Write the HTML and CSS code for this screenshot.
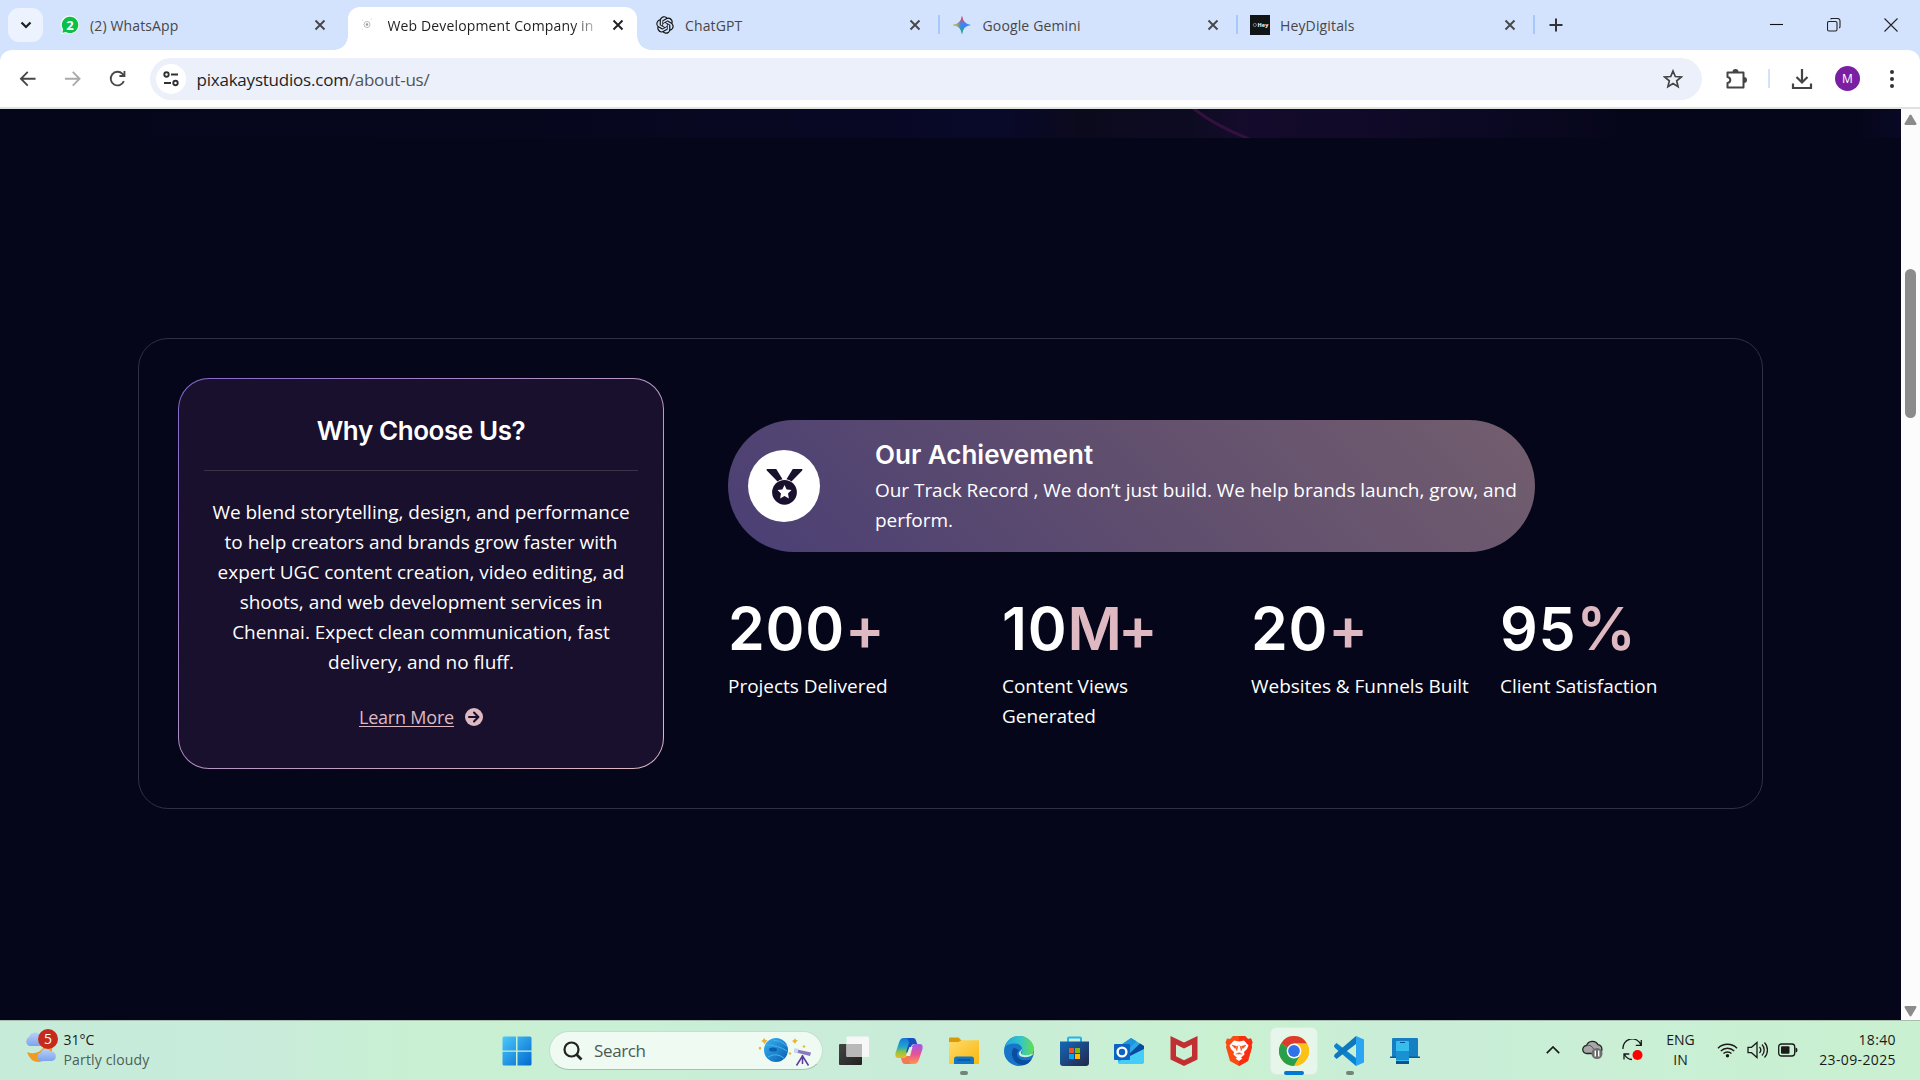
FILE: index.html
```html
<!DOCTYPE html>
<html lang="en">
<head>
<meta charset="utf-8">
<title>Web Development Company in Chennai</title>
<link rel="stylesheet" href="styles.css">
</head>
<body>
<header class="browser">
  <div class="tabstrip">
    <button class="tab-search" aria-label="Search tabs"><svg width="12" height="8" viewBox="0 0 12 8"><path d="M1.500 1.500 6 6l4.500-4.500" fill="none" stroke="#1f1f1f" stroke-width="2.200"/></svg></button>
    <div class="tabs">
      <div class="tab">
        <svg class="fav" viewBox="0 0 20 20"><path d="M10 .5a9.300 9.300 0 1 1-4.500 17.500L.8 19.200 2 14.800A9.300 9.300 0 0 1 10 .5z" fill="#f3fbf5"/><path d="M10 1.700a8.200 8.200 0 1 1-4.200 15.200L2.300 17.800l.9-3.400A8.200 8.200 0 0 1 10 1.700z" fill="#0bbf47"/><text x="10" y="14.500" text-anchor="middle" class="wa-count">2</text></svg>
        <span class="tab-title">(2) WhatsApp</span>
        <svg class="close" viewBox="0 0 12 12"><path d="M1.500 1.500l9 9m0-9l-9 9"/></svg>
      </div>
      <div class="tab active">
        <svg class="fav" viewBox="0 0 20 20"><circle cx="9" cy="9.500" r="3" fill="none" stroke="#bbb" stroke-width="1"/><circle cx="9" cy="9.500" r="1.200" fill="#999"/><path d="M4 6l1-1.500M13 5l.8-1.500M4 14l.5 1" stroke="#ddd"/></svg>
        <span class="tab-title fade">Web Development Company in</span>
        <svg class="close" viewBox="0 0 12 12"><path d="M1.500 1.500l9 9m0-9l-9 9"/></svg>
      </div>
      <div class="tab">
        <svg class="fav" viewBox="0 0 24 24"><path d="M22.280 9.820a5.980 5.980 0 0 0-.52-4.910 6.050 6.050 0 0 0-6.510-2.900A6.070 6.070 0 0 0 4.980 4.180a5.980 5.980 0 0 0-4 2.900 6.050 6.050 0 0 0 .74 7.100 5.980 5.980 0 0 0 .51 4.910 6.050 6.050 0 0 0 6.520 2.900A5.980 5.980 0 0 0 13.260 24a6.060 6.060 0 0 0 5.770-4.210 5.990 5.990 0 0 0 4-2.900 6.060 6.060 0 0 0-.75-7.070zm-9.020 12.610a4.480 4.480 0 0 1-2.880-1.040l.14-.08 4.780-2.760a.8.8 0 0 0 .39-.68v-6.740l2.020 1.170v5.630a4.500 4.500 0 0 1-4.450 4.500zM3.600 18.300a4.470 4.470 0 0 1-.54-3.010l.14.090 4.780 2.760a.77.77 0 0 0 .78 0l5.840-3.370v2.330l-4.860 2.830A4.500 4.500 0 0 1 3.600 18.300zM2.340 7.900a4.490 4.490 0 0 1 2.370-1.970V11.600a.77.77 0 0 0 .39.680l5.810 3.350-2.020 1.170-4.900-2.760A4.500 4.500 0 0 1 2.340 7.900zm16.600 3.850-5.840-3.370 2.020-1.160 4.900 2.780a4.500 4.500 0 0 1-.68 8.100v-5.670a.79.79 0 0 0-.4-.68zm2.010-3.020-.14-.09-4.780-2.780a.78.78 0 0 0-.78 0L9.410 9.230V6.900l4.860-2.800a4.500 4.500 0 0 1 6.680 4.660zM8.310 12.860l-2.020-1.160V6.070a4.500 4.500 0 0 1 7.380-3.450l-.14.080-4.780 2.760a.8.8 0 0 0-.39.680zm1.090-2.360 2.600-1.500 2.610 1.500v3l-2.600 1.500-2.610-1.500z" fill="#111" fill-rule="evenodd" transform="translate(1.500 1.500) scale(.875)"/></svg>
        <span class="tab-title">ChatGPT</span>
        <svg class="close" viewBox="0 0 12 12"><path d="M1.500 1.500l9 9m0-9l-9 9"/></svg>
      </div>
      <div class="tab sep">
        <svg class="fav gem" viewBox="0 0 20 20"><defs><clipPath id="star"><path d="M10 .8C11 6.500 13.500 9 19.200 10 13.500 11 11 13.500 10 19.200 9 13.500 6.500 11 .8 10 6.500 9 9 6.500 10 .8z"/></clipPath><radialGradient id="gr" cx="10" cy="0" r="9" gradientUnits="userSpaceOnUse"><stop offset=".4" stop-color="#f04a4a"/><stop offset="1" stop-color="#f04a4a" stop-opacity="0"/></radialGradient><radialGradient id="gy" cx="0" cy="10" r="9" gradientUnits="userSpaceOnUse"><stop offset=".3" stop-color="#fbbc04"/><stop offset="1" stop-color="#fbbc04" stop-opacity="0"/></radialGradient><radialGradient id="gg" cx="9" cy="20" r="9" gradientUnits="userSpaceOnUse"><stop offset=".3" stop-color="#22b04c"/><stop offset="1" stop-color="#22b04c" stop-opacity="0"/></radialGradient></defs><g clip-path="url(#star)"><path d="M0 0h20v20H0z" fill="#3b86f7"/><path d="M0 0h20v20H0z" fill="url(#gr)"/><path d="M0 0h20v20H0z" fill="url(#gy)"/><path d="M0 0h20v20H0z" fill="url(#gg)"/></g></svg>
        <span class="tab-title">Google Gemini</span>
        <svg class="close" viewBox="0 0 12 12"><path d="M1.500 1.500l9 9m0-9l-9 9"/></svg>
      </div>
      <div class="tab sep">
        <svg class="fav" viewBox="0 0 20 20"><path d="M0 0h20v20H0z" fill="#101416"/><circle cx="4.800" cy="10" r="1.600" fill="none" stroke="#778"/><text x="7.500" y="12" class="hey-mark">Hey</text></svg>
        <span class="tab-title">HeyDigitals</span>
        <svg class="close" viewBox="0 0 12 12"><path d="M1.500 1.500l9 9m0-9l-9 9"/></svg>
      </div>
    </div>
    <div class="new-tab"><svg width="14" height="14" viewBox="0 0 14 14"><path d="M7 .5v13M.5 7h13" stroke="#333" stroke-width="2"/></svg></div>
    <div class="window-controls">
      <svg viewBox="0 0 14 14"><path d="M0 6.500h13" stroke="#111"/></svg>
      <svg viewBox="0 0 14 14"><rect x=".5" y="3.500" width="9.500" height="9.500" rx="1.500"/><path d="M3.500 1.200Q4 .5 5 .5h5.500a2.500 2.500 0 0 1 2.500 2.500v5.500q0 1-.8 1.500"/></svg>
      <svg viewBox="0 0 14 14"><path d="M.5.5l13 13m0-13l-13 13"/></svg>
    </div>
  </div>
  <div class="toolbar">
    <div class="nav">
      <svg viewBox="0 0 20 20"><path d="M18 10H3m7-7-7 7 7 7"/></svg>
      <svg class="off" viewBox="0 0 20 20"><path d="M2 10h15m-7-7 7 7-7 7"/></svg>
      <svg viewBox="0 0 20 20"><path d="M17.300 12.500A7 7 0 1 1 15.900 5l1.700 1.700M17.900 2v5.200h-5.200"/></svg>
    </div>
    <div class="omnibox">
      <span class="site-chip"><svg width="18" height="18" viewBox="0 0 18 18"><g fill="none" stroke="#303134" stroke-width="1.900"><circle cx="4.500" cy="4.500" r="2.200"/><path d="M9 4.500h7M2 13h7"/><circle cx="13.500" cy="13" r="2.200"/></g></svg></span>
      <span class="url">pixakaystudios.com<span>/about-us/</span></span>
      <svg class="bookmark" width="20" height="20" viewBox="0 0 20 20"><path d="M10 2l2.300 5.500 6 .5-4.600 3.900 1.400 5.800L10 14.600l-5.100 3.100 1.400-5.800L1.700 8l6-.5z" fill="none" stroke="#444" stroke-width="1.700"/></svg>
    </div>
    <div class="actions">
      <svg class="ext" width="24" height="24" viewBox="0 0 24 24"><path d="M3.500 5.500h16v15h-16v-4.500q2.800-.5 2.800-3t-2.800-3z" fill="none" stroke="#444" stroke-width="2" stroke-linejoin="round"/><path d="M8.500 5a3 3 0 0 1 6 0zM20 10a3 3 0 0 1 0 6z" fill="#444"/></svg>
      <i class="bar"></i>
      <svg class="dl" width="22" height="22" viewBox="0 0 22 22"><path d="M11 1v13M5.500 9l5.500 5.500L16.500 9M2 15.500V20h18v-4.500" fill="none" stroke="#444" stroke-width="2.200"/></svg>
      <span class="avatar">M</span>
      <svg class="more" width="6" height="20" viewBox="0 0 6 20"><g fill="#333"><circle cx="3" cy="3" r="2"/><circle cx="3" cy="10" r="2"/><circle cx="3" cy="17" r="2"/></g></svg>
    </div>
  </div>
</header>

<div class="viewport">
  <main class="page">
    <div class="hero-tail"><svg width="70" height="29" viewBox="0 0 70 29"><path d="M3-1Q25 17 62 31" fill="none" stroke="#32113f" stroke-width="3"/></svg></div>
    <section class="about">
      <article class="why">
        <h2>Why Choose Us?</h2>
        <hr>
        <p>We blend storytelling, design, and performance<br>to help creators and brands grow faster with<br>expert UGC content creation, video editing, ad<br>shoots, and web development services in<br>Chennai. Expect clean communication, fast<br>delivery, and no fluff.</p>
        <a class="learn"><span>Learn More</span><svg width="18" height="18" viewBox="0 0 18 18"><circle cx="9" cy="9" r="9" fill="#dfb9c2"/><path d="M4 9h9M9 4.600 13.400 9 9 13.400" fill="none" stroke="#19102d" stroke-width="2.100" stroke-linecap="round" stroke-linejoin="round"/></svg></a>
      </article>
      <div class="record">
        <div class="achievement">
          <span class="medal"><svg width="37" height="37" viewBox="0 0 38 38"><g fill="#19102d"><path d="M1 1h9.500l6.500 10.500q-3 .6-5.200 2.300L.8 2.500Q.2 1.300 1 1zM37 1h-9.500L21 11.500q3 .6 5.200 2.300L37.200 2.500Q37.800 1.300 37 1z"/><circle cx="19" cy="25" r="12.700"/></g><path d="M19 17.500l2.200 4.500 5 .7-3.600 3.500.9 5-4.500-2.400-4.500 2.400.9-5-3.600-3.500 5-.7z" fill="#fff"/></svg></span>
          <div>
            <h3>Our Achievement</h3>
            <p>Our Track Record , We don’t just build. We help brands launch, grow, and<br>perform.</p>
          </div>
        </div>
        <div class="stats">
          <div><strong>200<em>+</em></strong><p>Projects Delivered</p></div>
          <div class="views"><strong>10<em>M+</em></strong><p>Content Views Generated</p></div>
          <div><strong>20<em>+</em></strong><p>Websites &amp; Funnels Built</p></div>
          <div class="rate"><strong>95<em>%</em></strong><p>Client Satisfaction</p></div>
        </div>
      </div>
    </section>
  </main>
  <div class="scrollbar">
    <svg width="13" height="12" viewBox="0 0 13 12"><path d="M5.500 1.200q1-1.200 2 0l4.800 8q.6 1.600-.8 1.800h-10Q.1 10.800.7 9.200z"/></svg>
    <i class="thumb"></i>
    <svg class="down" width="13" height="12" viewBox="0 0 13 12"><path d="M5.500 10.800q1 1.200 2 0l4.800-8Q12.900 1.200 11.500 1h-10Q.1 1.200.7 2.800z"/></svg>
  </div>
</div>

<footer class="taskbar">
  <div class="weather">
    <svg width="36" height="40" viewBox="0 0 36 40"><defs><linearGradient id="cl" x2="0" y2="1"><stop stop-color="#b9d0f8"/><stop offset="1" stop-color="#7da4ec"/></linearGradient></defs><path d="M5 19a5 5 0 0 1 0-9 6.500 6.500 0 0 1 12-1v10z" fill="url(#cl)"/><path d="M28 17q2 16-13 18-9 0-12-10 10 4 17-5z" fill="#f39a1f"/><path d="M16 34a4.500 4.500 0 0 1 1-8.500 5.500 5.500 0 0 1 10-1 4.800 4.800 0 0 1 1 9.500z" fill="url(#cl)"/><circle cx="24" cy="12" r="10" fill="#c42b1c"/><text x="24" y="17" text-anchor="middle" class="badge-num">5</text></svg>
    <div><p>31°C</p><p class="sub">Partly cloudy</p></div>
  </div>
  <div class="apps">
    <span class="app"><svg viewBox="0 0 30 30"><defs><linearGradient id="wn" x2="1" y2="1"><stop stop-color="#4cc9fb"/><stop offset="1" stop-color="#0069cf"/></linearGradient></defs><path d="M2 .5h12v14H.5V2Q.5.500 2 .5zM15.500.5H28q1.500 0 1.500 1.500v12.500h-14zM.5 15.800H14v13.700H2Q.5 29.500.5 28zM15.500 15.800h14V28q0 1.500-1.500 1.500H15.500z" fill="url(#wn)"/></svg></span>
    <div class="search">
      <svg width="20" height="20" viewBox="0 0 20 20"><circle cx="8.500" cy="8.500" r="7" fill="none" stroke="#222" stroke-width="2.200"/><path d="M13.500 13.500l5 5" stroke="#222" stroke-width="2.600"/></svg>
      <span>Search</span>
      <svg class="space" width="54" height="32" viewBox="0 0 54 32"><defs><linearGradient id="pl" x2="1" y2="1"><stop stop-color="#35b5f5"/><stop offset="1" stop-color="#0a5cad"/></linearGradient></defs><circle cx="18" cy="15" r="12" fill="url(#pl)"/><path d="M8 10q12 0 21 6M10 22q8-5 16 1M15 5q8 0 14 6" fill="none" stroke="#45b3ee" stroke-width="1"/><ellipse cx="15" cy="14.500" rx="4" ry="2" fill="#0d5eac"/><g fill="#e7b52c"><path d="M6 3l1.500 2L9.500 5.500 8 7l-1.500 2L5 7 3 6l2-1zM37 3l1 2 2 .5-2 1.500-1 2-1.500-2L34 6l2-1zM2 11.500l1.500 1.500L2 15 .5 13zM46 10l1.500 1.500L46 13l-1.500-1.500zM32 17l1.500 1.500L32 20l-1.500-1.500z"/></g><path d="M37 14l16 3.500-1 3.500-16-4z" fill="#8c78bd"/><path d="M36.500 13l4 1-1 4.400-3.500-.9z" fill="#c8d9ef"/><path d="M44.500 20v9M44.500 21l-6 9.500M44.500 21l6 9.500" stroke="#5b3c9c" stroke-width="1.500" fill="none"/></svg>
    </div>
    <span class="app"><svg viewBox="0 0 30 30"><defs><linearGradient id="tv" x2="1" y2="1"><stop stop-color="#444"/><stop offset="1" stop-color="#222"/></linearGradient></defs><rect x="0" y="8" width="23" height="21" rx="1" fill="url(#tv)"/><rect x="7.500" y=".5" width="22.500" height="20.500" rx="1" fill="#f7f7f7"/><path d="M7.500 8H23v13H8.500q-1 0-1-1z" fill="#b9b9b9"/></svg></span>
    <span class="app"><svg viewBox="0 0 30 30"><defs><linearGradient id="c1" x2="0" y2="1"><stop stop-color="#1677d8"/><stop offset=".45" stop-color="#22a5cf"/><stop offset=".7" stop-color="#8fc63f"/><stop offset="1" stop-color="#f1b52a"/></linearGradient><linearGradient id="c2" x2="0" y2="1"><stop stop-color="#9a5ce8"/><stop offset=".5" stop-color="#e8509a"/><stop offset="1" stop-color="#ff9a4a"/></linearGradient></defs><path d="M19 2H9.500Q6.500 2 5.200 6L1.500 17q-1 5 3 5h4q3 0 4-4l3-11.500Q16.500 3 19 2z" fill="url(#c1)"/><path d="M11 28h9.500q3 0 4.300-4l3.700-11q1-5-3-5h-4q-3 0-4 4l-3 11.500Q13.500 27 11 28z" fill="url(#c2)"/><path d="M12 2h7q2.500 0 3.200 3l1 3h-2.700q-3 0-4 4l-1.300 4.500H12l3-10Q14.500 2.500 12 2z" fill="#164fbf"/><path d="M18 28h-7q-2.500 0-3.200-3L7 22h2q3 0 4-4l.5-2h4.500l-3 7.500q0 4 3 4.500z" fill="#f27a52"/><path d="M15.500 11h3l-2.500 9h-4z" fill="#e4f1e6"/></svg></span>
    <span class="app running"><svg viewBox="0 0 30 30"><defs><linearGradient id="fd" x2="1" y2="1"><stop stop-color="#ffda6b"/><stop offset="1" stop-color="#f9b80d"/></linearGradient></defs><path d="M0 9V2.500Q0 1.500 1 1.500h8.500l3 3V9z" fill="#d99b04"/><path d="M0 6h9.500l3-1.700H30V28H0z" fill="url(#fd)"/><path d="M5 28v-5q0-2.500 2.500-2.500h15q2.500 0 2.500 2.500v5z" fill="#1076c9"/><path d="M8.500 24h13" stroke="#084f91" stroke-width="1.200"/></svg></span>
    <span class="app"><svg viewBox="0 0 30 30"><defs><linearGradient id="e1" x2="1"><stop stop-color="#1fa5e0"/><stop offset=".55" stop-color="#34c6c6"/><stop offset="1" stop-color="#65de4c"/></linearGradient></defs><circle cx="15" cy="15" r="15" fill="#1675c9"/><path d="M.8 11C3 3.500 9 0 15 0c9 0 15 6.500 15 13 0 5-4 7.500-8.500 7.500-3.500 0-5-1.500-4-3C20 13 17 7.500 10.500 7.500 6 7.500 2.500 9 .8 11z" fill="url(#e1)"/><path d="M10 11.500c-5 6-1 16.500 9 17.800 4-.6 7-3 8.800-6.300-3.300 1.800-9.500 2-12.800-.8-3-2.700-2.500-6 0-8z" fill="#0b4e9e"/><path d="M30 17c-2 3-5 4.200-9 4.200-4.500 0-6.500-2-6.200-4.200.2-1.300 2-2 3.500-4.500-.3 2.500-2 3.500-1.200 5 1 2 7 2.500 12.900-.5z" fill="#ccefdc"/></svg></span>
    <span class="app"><svg viewBox="0 0 30 30"><defs><linearGradient id="st" x2="1" y2="1"><stop stop-color="#1269b8"/><stop offset="1" stop-color="#25264c"/></linearGradient></defs><path d="M9 7V2.500Q9 1.500 10 1.500h11q1 0 1 1V7" fill="none" stroke="#22b4f0" stroke-width="2"/><path d="M1 5.500h29V27q0 3-3 3H4q-3 0-3-3z" fill="url(#st)"/><path d="M10 12h5v5h-5z" fill="#f25022"/><path d="M16 12h5v5h-5z" fill="#7fba00"/><path d="M10 18h5v5h-5z" fill="#00a4ef"/><path d="M16 18h5v5h-5z" fill="#ffb900"/></svg></span>
    <span class="app"><svg viewBox="0 0 30 30"><path d="M4 11 17 2l13 8v15q0 3-3 3H7q-3 0-3-3z" fill="#2aa8ea"/><path d="M4 11 17 2l5.500 3.200L10 18z" fill="#1f95dd"/><path d="M14 19 26 7.500l4 2.500v4L14 24z" fill="#0a4a9c"/><path d="M4 26l26-13v12q0 3-3 3H7q-3 0-3-2z" fill="#45cdf7"/><path d="M0 9q0-1 1-1h14q1 0 1 1v14q0 1-1 1H1q-1 0-1-1z" fill="#0b63c4"/><circle cx="8" cy="16" r="4.400" fill="none" stroke="#fff" stroke-width="2.400"/></svg></span>
    <span class="app"><svg viewBox="0 0 30 30"><path d="M1.500 0 15 6.500 28.500 0v23.500L15 30 1.500 23.500zM7 8.500v11.800l8 4 8-4V8.500l-8 4z" fill="#c12f33" fill-rule="evenodd"/></svg></span>
    <span class="app"><svg viewBox="0 0 30 30"><path d="M9 0h12l3 3 3-.5 1.500 4-1 2.500.5 2-4 14L15 30 6 25 2 11l.5-2-1-2.500 1.500-4L6 3z" fill="#fb4a12"/><path d="M15 0h6l3 3 3-.5 1.500 4-1 2.500.5 2-4 14L15 30z" fill="#f92d10"/><path d="M10 4.500l5 1 5-1 4.500 5-1.500 3.500-3 3 .5 2.500L15 23.500 9.500 18.500l.5-2.500-3-3-1.500-3.500z" fill="#fff"/><path d="M8 9l5 1.500-2 2zM22 9l-5 1.500 2 2zM13 15l-1-2.500 2.300-3M17 15l1-2.500-2.300-3M11.500 18.200l3.500-1.500 3.500 1.500" fill="#fb4a12" stroke="#fb4a12" stroke-width=".5"/><path d="M11.500 22.500l3.500-1.500 3.500 1.500-3.500 2.500z" fill="#fff"/></svg></span>
    <span class="app running current"><svg viewBox="0 0 30 30"><circle cx="15" cy="15" r="15" fill="#fbc116"/><path d="M15 15 2 7.500A15 15 0 0 1 28 7.500H15z" fill="#de3b2f"/><path d="M2 7.500A15 15 0 0 0 15 30l6.500-11.200L15 15z" fill="#2a9f4b"/><path d="M28 7.500H15L21.500 18.700 15 30A15 15 0 0 0 28 7.500z" fill="#fbc116"/><circle cx="15" cy="15" r="7.400" fill="#fff"/><circle cx="15" cy="15" r="5.900" fill="#2f72ea"/></svg></span>
    <span class="app running"><svg viewBox="0 0 30 30"><path d="M0 9.500 2.500 7 22 22v8L1 12q-1-1.300-1-2.500z" fill="#0a84d0"/><path d="M0 20.500 2.500 23 22 8V0L1 18q-1 1.300-1 2.500z" fill="#0f78bd"/><path d="M22 0l8 3.500v23L22 30z" fill="#2aa5f3"/></svg></span>
    <span class="app"><svg viewBox="0 0 30 30"><path d="M3 2h24q1 0 1 1v19H2V3q0-1 1-1z" fill="#167fc4"/><path d="M0 20.500h30V22H0z" fill="#0c5c98"/><rect x="6" y="5" width="13" height="23" rx="1" fill="#35bdec"/><path d="M6 15h13v9H6z" fill="#1890d2"/><path d="M6 25h13v3H6z" fill="#0e5190"/><path d="M10 6.500h5" stroke="#0e5190"/></svg></span>
  </div>
  <div class="tray">
    <span class="cell"><svg width="14" height="8" viewBox="0 0 14 8"><path d="M.8 7.200 7 1l6.200 6.200" fill="none" stroke="#1a1a1a" stroke-width="1.700"/></svg></span>
    <span class="cell"><svg width="21" height="20" viewBox="0 0 21 20"><path d="M5 13.500a4 4 0 0 1-.5-8 6.300 6.300 0 0 1 11.500-.8 4.600 4.600 0 0 1 1 8.800z" fill="#a6a6a6" stroke="#222" stroke-width="1.300"/><path d="M4.500 5.500q5-1 7 3.500" fill="none" stroke="#555"/><circle cx="15" cy="13.500" r="5.500" fill="#6d6d6d"/><path d="M13.300 10.500v6M16.700 10.500v6" stroke="#fff" stroke-width="1.400"/></svg></span>
    <span class="cell"><svg width="21" height="22" viewBox="0 0 21 22"><path d="M1 10A9.300 9.300 0 0 1 19 6M19.300 1v5.300h-5.500M10 20.500a9 9 0 0 1-7.500-5M2 20.500v-5.500h5.300" fill="none" stroke="#1a1a1a" stroke-width="1.300"/><circle cx="15.500" cy="16" r="5" fill="#f00"/></svg></span>
    <div class="lang"><p>ENG</p><p>IN</p></div>
    <span class="cell status"><svg width="21" height="16" viewBox="0 0 21 16"><g fill="none" stroke="#1a1a1a" stroke-width="1.400"><path d="M1 6.200a13.400 13.400 0 0 1 19 0M3.800 9a9.500 9.500 0 0 1 13.400 0M6.500 11.600a5.700 5.700 0 0 1 8 0"/></g><circle cx="10.500" cy="13.800" r="1.700" fill="#1a1a1a"/></svg></span>
    <span class="cell status"><svg width="21" height="18" viewBox="0 0 21 18"><g fill="none" stroke="#1a1a1a" stroke-width="1.300"><path d="M1 6.300h3.500L10 1.500v15l-5.500-4.800H1z"/><path d="M12.500 6a4.500 4.500 0 0 1 0 6M15 3.500a8 8 0 0 1 0 11M17.500 1.500a11 11 0 0 1 0 15"/></g></svg></span>
    <span class="cell status"><svg width="20" height="14" viewBox="0 0 20 14"><rect x=".7" y="1" width="16" height="12" rx="2.800" fill="none" stroke="#1a1a1a" stroke-width="1.300"/><rect x="3" y="3.300" width="8.500" height="7.400" rx="1" fill="#1a1a1a"/><path d="M17.500 4.500q2 0 2 2.500t-2 2.500z" fill="#1a1a1a"/></svg></span>
    <div class="clock"><p>18:40</p><p>23-09-2025</p></div>
  </div>
</footer>
</body>
</html>
```
FILE: styles.css
```css
* { box-sizing: border-box; }
body {
  margin: 0;
  width: 1920px;
  height: 1080px;
  overflow: hidden;
  display: flex;
  flex-direction: column;
  background: #05061a;
  font-family: "Open Sans", "Noto Sans", sans-serif;
}
h2, h3, p { margin: 0; }
svg { display: block; flex: none; }

/* Browser chrome */
.browser { height: 109px; background: #d3e2fd; border-bottom: 2px solid #dfe3e0; }
.tabstrip { height: 50px; display: flex; align-items: center; }
.tab-search {
  width: 35px; height: 34px; margin: 0 7.5px 0 8px; padding: 0;
  display: grid; place-items: center;
  border: 0; border-radius: 11px; background: #ecf2fe;
}
.tabs { display: flex; gap: 8.5px; height: 50px; align-items: flex-end; }
.tab {
  position: relative;
  width: 289px; height: 43px; padding: 0 13.5px 7px 9.5px;
  display: flex; align-items: center; gap: 10px;
  font-size: 14px; letter-spacing: .14px; color: #474747;
}
.tab.active { background: #fff; border-radius: 12px 12px 0 0; color: #1f1f1f; }
.tab.active::before, .tab.active::after {
  content: ""; position: absolute; bottom: 0; width: 14px; height: 14px;
}
.tab.active::before { left: -14px; background: radial-gradient(circle at 0 0, transparent 13.5px, #fff 14px); }
.tab.active::after { right: -14px; background: radial-gradient(circle at 100% 0, transparent 13.5px, #fff 14px); }
.tab.sep::before, .tab.sep:last-child::after {
  content: ""; position: absolute; top: 8px; left: -5px; width: 2px; height: 19px; background: #a8c7fa;
}
.tab.sep:last-child::after { left: auto; right: -5px; }
.fav { width: 20px; height: 20px; }
.fav.gem { margin: 0 1px 0 -1px; }
.tab-title { flex: 1; padding-top: 2px; white-space: nowrap; overflow: hidden; line-height: 22px; }
.fade { -webkit-mask-image: linear-gradient(90deg, #000 185px, rgba(0,0,0,.3) 206px); mask-image: linear-gradient(90deg, #000 185px, rgba(0,0,0,.3) 206px); }
.close { width: 12px; height: 12px; stroke: currentColor; stroke-width: 1.9; }
.wa-count { font: 700 13px "Open Sans", sans-serif; fill: #fff; }
.hey-mark { font: 700 5.5px "Open Sans", sans-serif; fill: #fff; }
.new-tab { margin-left: 19px; }
.window-controls { margin-left: auto; display: flex; gap: 43px; padding-right: 22px; }
.window-controls svg { width: 14px; height: 14px; fill: none; stroke: #222; stroke-width: 1.1; }

.toolbar {
  height: 57px; padding: 0 25px 0 18px;
  display: flex; align-items: center;
  background: #fff; border-radius: 12px 12px 0 0;
}
.nav { display: flex; gap: 25px; width: 132px; }
.nav svg { width: 19.5px; height: 19.5px; fill: none; stroke: #474747; stroke-width: 1.9; }
.nav .off { stroke: #aaa; }
.omnibox {
  width: 1552px; height: 42px; padding: 0 19px 0 6px;
  display: flex; align-items: center;
  border-radius: 21px; background: #ecf0fa;
}
.site-chip { width: 30px; height: 30px; border-radius: 50%; background: #fff; display: grid; place-items: center; }
.url { flex: 1; margin-left: 10.5px; padding-top: 1.5px; font-size: 17px; letter-spacing: -.22px; color: #1f1f1f; }
.url span { color: #505357; }
.actions { flex: 1; display: flex; align-items: center; }
.ext { margin-left: 22px; }
.bar { width: 2px; height: 19px; margin-left: 20px; background: #d3e2fd; }
.dl { margin-left: 21px; }
.avatar {
  width: 25px; height: 25px; margin-left: 22px; border-radius: 50%;
  background: #7b1fa2; color: #fff; font-size: 12px; line-height: 25px; text-align: center;
}
.more { margin-left: auto; }

/* Web page */
.viewport { height: 911px; display: flex; }
.page { width: 1901px; background: #05061a; }
.hero-tail {
  height: 29px; padding-left: 1190px;
  background: linear-gradient(90deg, #05061a 0, #06071d 500px, #080824 850px, #09092a 1000px, #0b0a1d 1080px, #0d0b22 1190px, #150b2c 1240px, #120a29 1330px, #0b0923 1480px, #06061b 1620px, #06061b 1860px, #090825 1901px);
}
.about {
  width: 1625px; height: 471px; margin: 200px 0 0 138px; padding: 39px;
  display: flex; gap: 64px;
  border: 1px solid #2f3040; border-radius: 30px;
}
.why {
  width: 486px; height: 391px; padding: 34px 25px 0;
  border: 1px solid transparent; border-radius: 31px;
  background: linear-gradient(#19102d, #19102d) padding-box, linear-gradient(135deg, #8368cb, #b795c3 50%, #dfb9c2) border-box;
  color: #fff; text-align: center;
}
h2, h3 { font: 600 26px/36px Inter, sans-serif; color: #fff; }
h2 { letter-spacing: -.42px; }
.why hr { height: 1px; margin: 21px 0 26px; border: 0; background: #3a3249; }
.why p { font-size: 19px; line-height: 30px; letter-spacing: -.03px; white-space: nowrap; }
.learn { margin-top: 25px; display: flex; justify-content: center; align-items: center; gap: 11px; color: #dfb9c2; }
.learn span { font-size: 18px; line-height: 30px; letter-spacing: -.2px; text-decoration: underline; text-decoration-thickness: 1px; text-underline-offset: 2px; }

.record { flex: 1; padding-top: 42px; color: #fff; font-size: 19px; line-height: 30px; }
.achievement {
  width: 807px; height: 132px; padding-left: 20px;
  display: flex; align-items: center; gap: 55px;
  border-radius: 66px;
  background: linear-gradient(45deg, #4a3f75, #604e6e 50%, #735e6e);
}
.achievement h3 { line-height: 34px; margin-bottom: 3px; padding-top: 1px; }
.achievement p { letter-spacing: -.04px; white-space: nowrap; }
.medal { width: 72px; height: 72px; border-radius: 50%; background: #fff; display: grid; place-items: center; }
.stats { margin-top: 42px; display: grid; grid-template-columns: 274px 249px 249px 1fr; }
.stats strong { display: flex; font: 600 59px/70px Inter, sans-serif; letter-spacing: .8px; }
.stats em { font-style: normal; color: #dfb9c2; }
.stats p { margin-top: 7px; max-width: 222px; letter-spacing: -.03px; }
.stats .views p { max-width: 150px; }
.stats .views em { letter-spacing: -4px; }

.scrollbar {
  width: 19px; padding: 5px 3px 3px;
  display: flex; flex-direction: column; align-items: center;
  background: #fcfcfc;
}
.scrollbar svg { fill: #8b8b8b; }
.thumb { width: 11px; height: 149px; margin-top: 143px; border-radius: 6px; background: #8b8b8b; }
.down { margin-top: auto; }

/* Taskbar */
.taskbar {
  height: 60px; display: flex; align-items: center;
  border-top: 1px solid #a9bfae;
  background: linear-gradient(90deg, #c7ebd9 0, #c8ebdb 250px, #c9f0d2 420px, #c9efd6 650px, #c9ecda 900px, #c9f1d1 1240px, #c9edd8 1400px, #caefd6 1600px, #c9f0d0 1920px);
  font-size: 14px; line-height: 20px; color: #1a1a1a;
}
.weather { width: 489.5px; padding: 0 0 2px 24px; display: flex; gap: 3.5px; align-items: center; }
.weather svg { margin-top: -6px; }
.weather .sub { color: #4d5f56; letter-spacing: .16px; }
.badge-num { font: 14px "Open Sans", sans-serif; fill: #fff; }
.apps { display: flex; align-items: center; width: 1043px; }
.app { position: relative; width: 55.1px; height: 48px; display: grid; place-items: center; }
.app > svg { position: relative; width: 30px; height: 30px; }
.running::after {
  content: ""; position: absolute; left: 24px; bottom: 0; width: 8px; height: 4px; border-radius: 2px; background: #71857a;
}
.current::before {
  content: ""; position: absolute; inset: 0 3.5px; border-radius: 6px; background: #e6f6ea; border: 1px solid #dcecdf;
}
.current::after { left: 17.5px; width: 20px; background: #0078d4; }
.search {
  width: 274px; height: 39px; margin: 0 3.5px 0 4px; padding: 0 10px 0 13px;
  display: flex; align-items: center; gap: 11.5px;
  border: 1px solid #c3dfcd; border-bottom-color: #a5c2b0; border-radius: 20px; background: #eefaf2;
  color: #4c5a52; font-size: 17px; letter-spacing: -.4px;
}
.space { margin-left: auto; }
.tray { flex: 1; padding-bottom: 1px; display: flex; align-items: center; }
.cell { width: 40px; display: grid; place-items: center; }
.lang { width: 56px; margin-right: 4px; text-align: center; }
.status { width: 30px; }
.clock { margin-left: auto; padding: 0 24px 1px 0; text-align: right; letter-spacing: .38px; }
```
